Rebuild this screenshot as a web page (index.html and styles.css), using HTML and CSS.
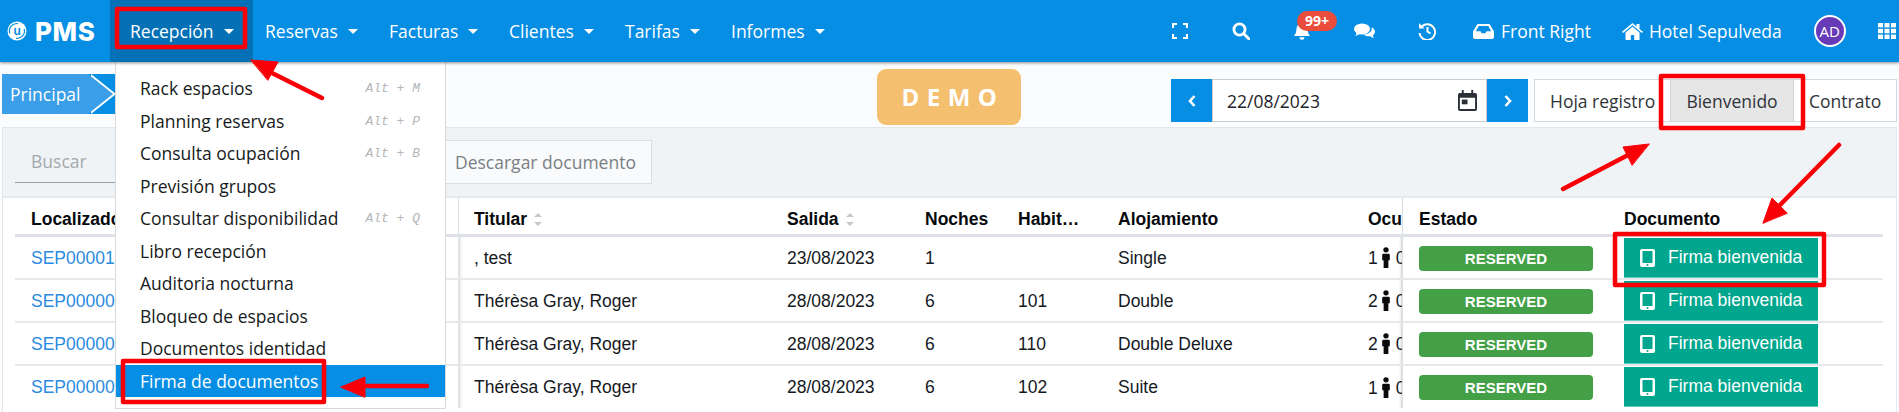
FILE: index.html
```html
<!DOCTYPE html>
<html lang="es">
<head>
<meta charset="utf-8">
<title>PMS</title>
<link rel="stylesheet" href="styles.css">
</head>
<body>
<header class="navbar">
  <div class="logo"><svg class="logo-mark" viewBox="0 0 20 20"><circle cx="10" cy="10" r="9.500" fill="#fff"/><path d="M2.800 12.500A7.500 7.500 0 0 1 11 2.600" fill="none" stroke="#058ee3" stroke-width="1.200"/><path d="M17.200 8A7.500 7.500 0 0 1 9 17.400" fill="none" stroke="#058ee3" stroke-width="1.200"/><text x="6.500" y="14" font-size="12" font-family="Liberation Sans" font-weight="700" fill="#058ee3">u</text></svg><span>PMS</span></div>
  <nav class="menu">
    <a class="menu-item active">Recepción<i class="caret"></i></a>
    <a class="menu-item">Reservas<i class="caret"></i></a>
    <a class="menu-item">Facturas<i class="caret"></i></a>
    <a class="menu-item">Clientes<i class="caret"></i></a>
    <a class="menu-item">Tarifas<i class="caret"></i></a>
    <a class="menu-item">Informes<i class="caret"></i></a>
  </nav>
  <div class="tools">
    <svg class="ico ico-full" viewBox="0 0 16 16" fill="none" stroke="#fff" stroke-width="2.200"><path d="M1 5V1h4M11 1h4v4M15 11v4h-4M5 15H1v-4"/></svg>
    <svg class="ico ico-search" viewBox="0 0 18 18" fill="none" stroke="#fff" stroke-width="2.800"><circle cx="7.500" cy="7.500" r="5.600"/><path d="M11.800 11.800 17 17" stroke-linecap="round"/></svg>
    <div class="bell">
      <svg class="ico" viewBox="0 0 18 18" fill="#fff"><path d="M9 1a6 6 0 0 0-5.600 6c0 4-1.400 5.500-2.400 7h16c-1-1.500-2.400-3-2.400-7A6 6 0 0 0 9 1Z"/><path d="M6.500 15.300h5a2.500 2.500 0 0 1-5 0Z"/></svg>
      <span class="badge">99+</span>
    </div>
    <svg class="ico ico-chat" viewBox="0 0 21 16" fill="#fff"><ellipse cx="8" cy="6" rx="8" ry="5.500"/><path d="M3 9 1.500 13 7 10.500Z"/><path d="M17.500 4.300c2.200 1 3.500 2.700 3.500 4.500 0 1.500-.9 2.800-2.300 3.700l1.300 3-4-2.300c-2.400.3-5-.5-6.300-1.800 4.200.1 9-2.500 7.800-7.100Z"/></svg>
    <svg class="ico ico-hist" viewBox="0 0 18 18" fill="none" stroke="#fff" stroke-width="2"><path d="M3 5.500A7.800 7.800 0 1 1 1.500 11"/><path d="M1 1v5.500h5.500Z" fill="#fff" stroke="none"/><path d="M9.500 5v4.500l3 2"/></svg>
    <div class="place">
      <svg class="ico ico-inbox" viewBox="0 0 21 15" fill="#fff"><path d="M4.500 0h12L21 7.500V13a2 2 0 0 1-2 2H2a2 2 0 0 1-2-2V7.500Zm1.200 2L2.800 7.200h4.700l1.200 2h3.600l1.200-2h4.700L15.300 2Z"/></svg>
      <span>Front Right</span>
    </div>
    <div class="place hotel">
      <svg class="ico ico-home" viewBox="0 0 21 17" fill="#fff"><path d="M10.500 0 0 8.800l1.100 1.300L10.500 2.300l9.400 7.800L21 8.800 17.500 5.900V1h-3v2.400Z"/><path d="M10.500 3.700 3.500 9.500V17h5.300v-5h3.400v5h5.300V9.500Z"/></svg>
      <span>Hotel Sepulveda</span>
    </div>
    <div class="avatar">AD</div>
    <svg class="ico ico-grid" viewBox="0 0 18 16" fill="#fff"><rect width="5" height="4.400"/><rect x="6.500" width="5" height="4.400"/><rect x="13" width="5" height="4.400"/><rect y="5.800" width="5" height="4.400"/><rect x="6.500" y="5.800" width="5" height="4.400"/><rect x="13" y="5.800" width="5" height="4.400"/><rect y="11.600" width="5" height="4.400"/><rect x="6.500" y="11.600" width="5" height="4.400"/><rect x="13" y="11.600" width="5" height="4.400"/></svg>
  </div>
</header>

<section class="subbar">
  <div class="crumbs">
    <span class="crumb">Principal</span>
  </div>
  <div class="demo">DEMO</div>
  <div class="date-group">
    <button class="date-btn"><svg viewBox="0 0 8 12" fill="none" stroke="#fff" stroke-width="2.600"><path d="M6.500 1 2 6l4.500 5"/></svg></button>
    <div class="date-input"><span>22/08/2023</span><svg viewBox="0 0 20 22" fill="#2b3038" class="cal"><path d="M4 0h2v3h8V0h2v3h2a2 2 0 0 1 2 2v15a2 2 0 0 1-2 2H2a2 2 0 0 1-2-2V5a2 2 0 0 1 2-2h2Zm-2 8v12h16V8Z"/><rect x="4" y="10" width="6" height="5"/></svg></div>
    <button class="date-btn"><svg viewBox="0 0 8 12" fill="none" stroke="#fff" stroke-width="2.600"><path d="M1.500 1 6 6l-4.500 5"/></svg></button>
  </div>
  <div class="tabs">
    <a class="tab first">Hoja registro</a>
    <a class="tab on">Bienvenido</a>
    <a class="tab">Contrato</a>
  </div>
</section>

<main class="panel">
  <div class="toolbar">
    <div class="search">Buscar</div>
    <button class="download">Descargar documento</button>
  </div>
  <div class="grid-wrap">
    <table class="grid">
      <colgroup><col class="c-loc"><col class="c-tit"><col class="c-sal"><col class="c-noc"><col class="c-hab"><col class="c-alo"><col class="c-ocu"><col class="c-est"><col class="c-doc"></colgroup>
      <thead>
        <tr>
          <th>Localizador</th>
          <th class="with-left">Titular<i class="sort"></i></th>
          <th>Salida<i class="sort"></i></th>
          <th>Noches</th>
          <th>Habit…</th>
          <th>Alojamiento</th>
          <th class="clip">Ocu</th>
          <th class="fixed">Estado</th>
          <th class="doc-h">Documento</th>
        </tr>
      </thead>
      <tbody>
        <tr>
          <td class="link">SEP000015</td><td class="with-left">, test</td><td>23/08/2023</td><td>1</td><td></td><td>Single</td>
          <td class="clip"><span>1<svg class="person" viewBox="0 0 8 22"><circle cx="4" cy="3" r="2.800"/><path d="M1.500 7h5A1.500 1.500 0 0 1 8 8.500V14H6.500v8h-5v-8H0V8.500A1.500 1.500 0 0 1 1.500 7Z"/></svg>0</span></td>
          <td class="fixed"><span class="status">RESERVED</span></td>
          <td class="doc"><a class="sign"><svg class="tablet" viewBox="0 0 15 18"><path fill="#fff" d="M2 0h11a2 2 0 0 1 2 2v14a2 2 0 0 1-2 2H2a2 2 0 0 1-2-2V2a2 2 0 0 1 2-2Zm.500 2v12h10V2Z"/><circle cx="7.500" cy="16" r="1" fill="#00a78e"/></svg>Firma bienvenida</a></td>
        </tr>
        <tr>
          <td class="link">SEP000009</td><td class="with-left">Thérèsa Gray, Roger</td><td>28/08/2023</td><td>6</td><td>101</td><td>Double</td>
          <td class="clip"><span>2<svg class="person" viewBox="0 0 8 22"><circle cx="4" cy="3" r="2.800"/><path d="M1.500 7h5A1.500 1.500 0 0 1 8 8.500V14H6.500v8h-5v-8H0V8.500A1.500 1.500 0 0 1 1.500 7Z"/></svg>0</span></td>
          <td class="fixed"><span class="status">RESERVED</span></td>
          <td class="doc"><a class="sign"><svg class="tablet" viewBox="0 0 15 18"><path fill="#fff" d="M2 0h11a2 2 0 0 1 2 2v14a2 2 0 0 1-2 2H2a2 2 0 0 1-2-2V2a2 2 0 0 1 2-2Zm.500 2v12h10V2Z"/><circle cx="7.500" cy="16" r="1" fill="#00a78e"/></svg>Firma bienvenida</a></td>
        </tr>
        <tr>
          <td class="link">SEP000008</td><td class="with-left">Thérèsa Gray, Roger</td><td>28/08/2023</td><td>6</td><td>110</td><td>Double Deluxe</td>
          <td class="clip"><span>2<svg class="person" viewBox="0 0 8 22"><circle cx="4" cy="3" r="2.800"/><path d="M1.500 7h5A1.500 1.500 0 0 1 8 8.500V14H6.500v8h-5v-8H0V8.500A1.500 1.500 0 0 1 1.500 7Z"/></svg>0</span></td>
          <td class="fixed"><span class="status">RESERVED</span></td>
          <td class="doc"><a class="sign"><svg class="tablet" viewBox="0 0 15 18"><path fill="#fff" d="M2 0h11a2 2 0 0 1 2 2v14a2 2 0 0 1-2 2H2a2 2 0 0 1-2-2V2a2 2 0 0 1 2-2Zm.500 2v12h10V2Z"/><circle cx="7.500" cy="16" r="1" fill="#00a78e"/></svg>Firma bienvenida</a></td>
        </tr>
        <tr>
          <td class="link">SEP000007</td><td class="with-left">Thérèsa Gray, Roger</td><td>28/08/2023</td><td>6</td><td>102</td><td>Suite</td>
          <td class="clip"><span>1<svg class="person" viewBox="0 0 8 22"><circle cx="4" cy="3" r="2.800"/><path d="M1.500 7h5A1.500 1.500 0 0 1 8 8.500V14H6.500v8h-5v-8H0V8.500A1.500 1.500 0 0 1 1.500 7Z"/></svg>0</span></td>
          <td class="fixed"><span class="status">RESERVED</span></td>
          <td class="doc"><a class="sign"><svg class="tablet" viewBox="0 0 15 18"><path fill="#fff" d="M2 0h11a2 2 0 0 1 2 2v14a2 2 0 0 1-2 2H2a2 2 0 0 1-2-2V2a2 2 0 0 1 2-2Zm.500 2v12h10V2Z"/><circle cx="7.500" cy="16" r="1" fill="#00a78e"/></svg>Firma bienvenida</a></td>
        </tr>
      </tbody>
    </table>
  </div>
</main>

<div class="dropdown">
  <ul>
    <li>Rack espacios<kbd>Alt + M</kbd></li>
    <li>Planning reservas<kbd>Alt + P</kbd></li>
    <li>Consulta ocupación<kbd>Alt + B</kbd></li>
    <li>Previsión grupos</li>
    <li>Consultar disponibilidad<kbd>Alt + Q</kbd></li>
    <li>Libro recepción</li>
    <li>Auditoria nocturna</li>
    <li>Bloqueo de espacios</li>
    <li>Documentos identidad</li>
    <li class="sel">Firma de documentos</li>
  </ul>
</div>

<svg class="annot" viewBox="0 0 1899 412" width="1899" height="412">
  <g fill="none" stroke="#f90006" stroke-width="4.500" stroke-linejoin="round">
    <rect x="117" y="9" width="128" height="38"/>
    <rect x="123" y="361" width="201" height="41"/>
    <rect x="1661" y="76" width="142" height="52"/>
    <rect x="1615" y="234" width="209" height="51"/>
  </g>
  <g stroke="#f90006" stroke-width="4.500" stroke-linecap="round" fill="#f90006">
    <path d="M322 98 268 71"/><path d="M251 60 278 62 268 80Z" stroke-width="1"/>
    <path d="M427 386H360"/><path d="M341 387 365 377V397Z" stroke-width="1"/>
    <path d="M1563 189 1630 154"/><path d="M1649 144 1623 147 1632 165Z" stroke-width="1"/>
    <path d="M1839 145 1780 205"/><path d="M1763 223 1772 198 1787 213Z" stroke-width="1"/>
  </g>
</svg>
</body>
</html>
```
FILE: styles.css
```css
* { box-sizing: border-box; }
html, body { margin: 0; height: 412px; overflow: hidden; }
body { width: 1899px; background: #fbfcfe; font-family: "Open Sans", sans-serif; color: #1d2329; position: relative; }

.navbar { height: 62px; background: #058ee3; box-shadow: 0 1px 3px rgba(0,0,0,.45); display: flex; align-items: stretch; position: relative; z-index: 3; color: #fff; }
.logo { width: 110px; padding-left: 7px; display: flex; align-items: center; gap: 8px; font: 800 26px "Inter", sans-serif; letter-spacing: .6px; }
.logo-mark { width: 20px; height: 20px; flex: none; }
.menu { display: flex; }
.menu-item { display: flex; align-items: center; font-size: 17.500px; padding: 0 0 0 12px; white-space: nowrap; width: 124px; }
.menu-item.active { background: #0470b5; width: 143px; padding-left: 20px; }
.caret { margin-left: 10px; border: 5px solid transparent; border-top-color: #fff; border-bottom: 0; }
.menu-item:nth-child(3) { width: 120px; }
.menu-item:nth-child(4) { width: 116px; }
.menu-item:nth-child(5) { width: 106px; }
.tools { flex: 1; display: flex; align-items: center; font-size: 17.500px; padding-left: 329px; }
.ico { display: block; flex: none; }
.ico-full { width: 16px; height: 16px; }
.ico-search { width: 18px; height: 18px; margin-left: 44px; }
.bell { position: relative; margin-left: 43px; }
.bell .ico { width: 18px; height: 18px; }
.badge { position: absolute; left: 4px; top: -11px; width: 40px; height: 20px; border-radius: 10px; background: #ea4d3c; font-size: 14px; font-weight: 700; line-height: 20px; text-align: center; }
.ico-chat { width: 21px; height: 16px; margin-left: 43px; }
.ico-hist { width: 18px; height: 18px; margin-left: 43px; }
.place { display: flex; align-items: center; gap: 7px; margin-left: 37px; white-space: nowrap; }
.ico-inbox { width: 21px; height: 15px; }
.hotel { margin-left: 31px; gap: 6px; }
.ico-home { width: 21px; height: 17px; }
.avatar { width: 32px; height: 32px; border-radius: 50%; margin-left: 32px; background: #673ab7; border: 2px solid #fff; font-size: 15px; line-height: 28px; text-align: center; flex: none; }
.ico-grid { width: 18px; height: 16px; margin-left: 32px; }

.subbar { height: 65px; display: flex; align-items: flex-start; }
.crumbs { width: 115px; height: 40px; margin: 12px 0 0 2px; background: #058ee3; flex: none; }
.crumb { display: block; position: relative; width: 86px; height: 40px; background: #3a9ee8; color: #fff; font-size: 17.500px; line-height: 40px; padding-left: 8px; }
.crumb::after { content: ""; position: absolute; left: 86px; top: 0; border-left: 25px solid #3a9ee8; border-top: 20px solid transparent; border-bottom: 20px solid transparent; filter: drop-shadow(3px 0 0 #fff); }
.demo { width: 144px; height: 56px; margin: 7px 0 0 760px; background: #f4c070; border-radius: 9px; color: #fff; font-weight: 700; font-size: 24px; letter-spacing: 7.500px; line-height: 56px; text-align: center; padding-left: 8px; flex: none; }
.date-group { display: flex; margin: 17px 0 0 150px; height: 43px; flex: none; }
.date-btn { width: 41px; padding: 0; border: 0; background: #058ee3; display: flex; align-items: center; justify-content: center; }
.date-btn svg { width: 8px; height: 12px; }
.date-input { width: 275px; background: #fff; border: 1px solid #ccc; display: flex; align-items: center; justify-content: space-between; padding: 0 9px 0 14px; font-size: 17.500px; }
.cal { width: 19px; height: 21px; }
.tabs { display: flex; margin: 17px 0 0 6px; height: 43px; width: 363px; background: #fff; border: 1px solid #d5d9de; font-size: 17.500px; color: #30343a; flex: none; }
.tab { display: flex; align-items: center; padding: 0 0 0 15px; white-space: nowrap; }
.tab.first { width: 135px; padding-left: 15px; }
.tab.on { width: 124px; justify-content: center; background: #e6e6e6; border-left: 1px solid #ccd2d8; border-right: 1px solid #ccd2d8; padding: 0; }

.panel { margin-left: 2px; width: 1895px; height: 285px; border-left: 1px solid #dfe4e9; border-right: 1px solid #e6eaee; }
.toolbar { height: 71px; background: #eff3f6; border-top: 1px solid #e3e7eb; border-bottom: 2px solid #e6eaed; display: flex; padding: 12px 0 0 12px; }
.search { width: 428px; height: 43px; border-bottom: 1px solid #9ba0a5; padding: 0 0 0 16px; color: #a4a8ac; font-size: 17.500px; line-height: 42px; }
.download { width: 210px; height: 44px; margin-left: -1px; background: #f8fafb; border: 1px solid #d9dee2; color: #7a7f84; font: 17.500px "Open Sans", sans-serif; text-align: left; padding: 0 0 0 12px; }
.grid-wrap { height: 214px; background: #fff; overflow: hidden; padding-left: 12px; }
.grid { border-collapse: separate; border-spacing: 0; table-layout: fixed; width: 1868px; font: 17.500px "Liberation Sans", sans-serif; color: #15191e; }
.c-loc { width: 443px; } .c-tit { width: 329px; } .c-sal { width: 138px; } .c-noc { width: 93px; } .c-hab { width: 100px; } .c-alo { width: 250px; } .c-ocu { width: 34px; } .c-est { width: 222px; } .c-doc { width: 259px; }
.grid th { height: 39px; padding: 6px 0 0; text-align: left; font-weight: 700; color: #070a0d; border-bottom: 3px solid #dee2e6; white-space: nowrap; }
.grid th:first-child, .grid td:first-child { padding-left: 16px; }
.grid td { height: 42px; padding: 1px 0 0; border-bottom: 2px solid #e6e9ec; white-space: nowrap; vertical-align: middle; }
.grid tr:first-child td { height: 43px; }
.grid tr:last-child td { border-bottom: 0; }
.grid .with-left { padding-left: 15px; border-left: 1px solid #dfe3e7; }
.grid td.with-left { box-shadow: inset 4px 0 3px -3px rgba(0,0,0,.18); }
.link { color: #2b8be0; }
.sort { display: inline-block; position: relative; width: 8px; height: 12px; margin-left: 7px; vertical-align: -1px; }
.sort::before, .sort::after { content: ""; position: absolute; left: 0; border: 4px solid transparent; }
.sort::before { top: -1px; border-bottom-color: #c3c7cb; border-top: 0; }
.sort::after { bottom: 0; border-top-color: #c3c7cb; border-bottom: 0; }
.grid .clip { overflow: hidden; }
.grid td.clip { box-shadow: inset -4px 0 3px -3px rgba(0,0,0,.18); }
.person { width: 8px; height: 21px; margin: 0 6px 0 4px; vertical-align: -4px; fill: #0b0b0b; }
.grid .fixed { border-left: 1px solid #d9dde1; padding-left: 16px; }
.grid td.doc { vertical-align: top; }
.status { display: block; width: 174px; height: 25px; background: #43a047; border-radius: 4px; color: #fff; font-size: 15px; font-weight: 700; line-height: 25px; text-align: center; }
.sign { display: flex; align-items: center; width: 194px; height: 40px; background: #00a78e; color: #fff; font-size: 17.500px; padding-left: 16px; border-bottom: 1px solid #5fcbb8; }
.tablet { width: 15px; height: 18px; margin-right: 13px; }

.dropdown { position: absolute; left: 115px; top: 62px; width: 331px; height: 347px; background: #fff; border: 1px solid #d8dadc; border-top: 0; z-index: 2; }
.dropdown ul { list-style: none; margin: 0; padding: 10px 0 0; }
.dropdown li { height: 32.500px; line-height: 32.500px; padding: 0 25px 0 24px; font-size: 17.500px; color: #171b20; display: flex; justify-content: space-between; }
.dropdown kbd { font: italic 13px "Liberation Mono", monospace; color: #b4b6b8; line-height: 34px; }
.dropdown li.sel { background: #058ee3; color: #fff; }

.annot { position: absolute; left: 0; top: 0; z-index: 5; pointer-events: none; }
```
